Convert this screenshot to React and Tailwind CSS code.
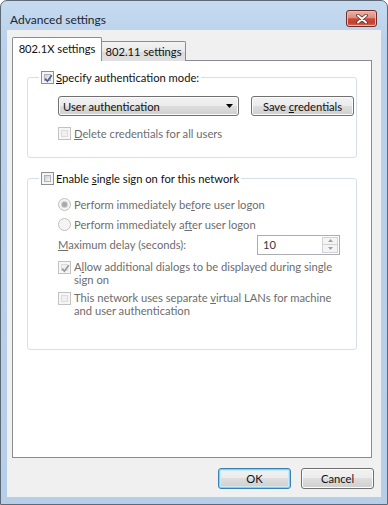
const btn =
  'border border-[#707070] rounded-[3px] bg-[linear-gradient(#f2f2f2_0%,#ebebeb_50%,#dddddd_50%,#cfcfcf_100%)] shadow-[inset_0_0_0_1px_#fbfbfb]'

function Check({ checked, disabled }) {
  return (
    <span
      className={`w-[13px] h-[13px] shrink-0 flex p-[2px] border ${
        disabled ? 'border-[#c2c2c2] bg-[#f6f6f6]' : 'border-[#8e8f8f] bg-[#f4f4f4]'
      }`}
    >
      <span
        className={`flex-1 relative ${
          disabled
            ? 'bg-[#f0f0f0] border border-[#dcdcdc]'
            : 'bg-[linear-gradient(135deg,#cbcfd5,#f7f7f7)] border border-[#aeb3b9]'
        }`}
      >
        {checked && (
          <svg width="11" height="11" viewBox="0 0 11 11" className="absolute -left-[2px] -top-[2px]">
            <path
              d="M2.2 5.6 L4.4 8.2 L8.8 2.2"
              fill="none"
              stroke={disabled ? '#9b9b9b' : '#4a5f8f'}
              strokeWidth="1.7"
            />
          </svg>
        )}
      </span>
    </span>
  )
}

function Radio({ checked }) {
  return (
    <span className="w-[13px] h-[13px] shrink-0 rounded-full border border-[#c0c0c0] bg-[#f4f4f4] flex items-center justify-center">
      {checked && <span className="w-[5px] h-[5px] rounded-full bg-[#a8a8a8] shadow-[0_0_0_1px_#d0d0d0]" />}
    </span>
  )
}

export default function App() {
  return (
    <div className="w-[388px] h-[505px] flex flex-col rounded-t-[7px] border border-[#5d6977] bg-[linear-gradient(#c6dbf0,#b9d1ea_40px,#b6cee8)] font-['Lato',sans-serif] text-[11.2px] leading-[15px] text-[#111] overflow-hidden">
      {/* title bar */}
      <div className="h-[29px] shrink-0 flex items-start justify-between pl-[9px] pr-[10px] pt-[9px]">
        <span className="mt-[2px] text-[12px] leading-[16px] text-[#1b2633]">Advanced settings</span>
        <div className="w-[31px] h-[17px] rounded-[3px] border border-[#6b2d27] bg-[linear-gradient(#eeb2a6_0%,#dc8d80_45%,#c94a3d_52%,#c2412f_80%,#d97464_100%)] flex items-center justify-center shadow-[inset_0_0_0_1px_#f2b8ac]">
          <svg width="12" height="10" viewBox="0 0 12 10">
            <path d="M2 1.5 L10 8.5 M10 1.5 L2 8.5" stroke="#6a2a22" strokeWidth="3.6" strokeLinecap="round" />
            <path d="M2 1.5 L10 8.5 M10 1.5 L2 8.5" stroke="#ffffff" strokeWidth="2" strokeLinecap="round" />
          </svg>
        </div>
      </div>

      {/* client area */}
      <div className="mx-[6px] h-[467px] shrink-0 bg-[#f0f0f0] flex flex-col pl-[5px] pr-[7px] pt-[7px]">
        {/* tabs */}
        <div className="flex items-end h-[24px] -mb-[1px] relative z-10">
          <div className="w-[90px] h-[24px] border border-b-0 border-[#898c95] bg-white rounded-t-[2px] text-center pt-[3px]">
            802.1X settings
          </div>
          <div className="w-[84px] h-[20px] border border-b-0 border-l-0 border-[#898c95] rounded-tr-[2px] bg-[linear-gradient(#f3f3f3,#e9e9e9_50%,#d9d9d9_51%,#e1e1e1)] text-center pt-[2px]">
            802.11 settings
          </div>
        </div>

        {/* tab panel */}
        <div className="w-[360px] h-[398px] border border-[#898c95] bg-white pl-[14px] pt-[8px]">
          <fieldset className="w-[330px] border border-[#d5dfe5] rounded-[3px] pl-[11px] pb-[16px]">
            <legend className="px-[2px] h-[16px] flex items-center gap-[2px]">
              <Check checked />
              <span>
                <u>S</u>pecify authentication mode:
              </span>
            </legend>
            <div className="ml-[19px] mt-[11px] flex items-center">
              <div className={`${btn} w-[181px] h-[20px] flex items-center justify-between pl-[4px] pr-[5px]`}>
                <span>User authentication</span>
                <svg width="7" height="4" viewBox="0 0 7 4">
                  <path d="M0 0 H7 L3.5 4 Z" fill="#000" />
                </svg>
              </div>
              <div className={`${btn} ml-[12px] w-[103px] h-[20px] flex items-center justify-center`}>
                <span>
                  Save <u>c</u>redentials
                </span>
              </div>
            </div>
            <div className="ml-[19px] mt-[10px] h-[15px] flex items-center gap-[3px] text-[#6d6d6d]">
              <Check disabled />
              <span>
                <u>D</u>elete credentials for all users
              </span>
            </div>
          </fieldset>

          <fieldset className="mt-[12px] w-[330px] border border-[#d5dfe5] rounded-[3px] pl-[11px] pb-[32px]">
            <legend className="px-[2px] h-[16px] flex items-center gap-[2px]">
              <Check />
              <span>
                Enable <u>s</u>ingle sign on for this network
              </span>
            </legend>
            <div className="ml-[19px] text-[#6d6d6d] flex flex-col">
              <div className="mt-[11px] h-[15px] flex items-center gap-[3px]">
                <Radio checked />
                <span>
                  Perform immediately be<u>f</u>ore user logon
                </span>
              </div>
              <div className="mt-[5px] h-[15px] flex items-center gap-[3px]">
                <Radio />
                <span>
                  Perform immediately a<u>f</u>ter user logon
                </span>
              </div>
              <div className="mt-[2px] h-[21px] flex items-center">
                <span className="w-[199px]">
                  <u>M</u>aximum delay (seconds):
                </span>
                <div className="w-[83px] h-[20px] border border-[#abadb3] bg-white flex items-center justify-between pl-[5px] pr-[1px] text-[#3a3a3a]">
                  <span>10</span>
                  <div className="w-[16px] h-[16px] flex flex-col border border-[#d2d2d2] bg-[#f4f4f4]">
                    <div className="flex-1 flex items-center justify-center border-b border-[#d2d2d2]">
                      <svg width="5" height="3" viewBox="0 0 5 3">
                        <path d="M0 3 L2.5 0 L5 3 Z" fill="#a0a0a0" />
                      </svg>
                    </div>
                    <div className="flex-1 flex items-center justify-center">
                      <svg width="5" height="3" viewBox="0 0 5 3">
                        <path d="M0 0 H5 L2.5 3 Z" fill="#a0a0a0" />
                      </svg>
                    </div>
                  </div>
                </div>
              </div>
              <div className="mt-[5px] flex items-start gap-[3px] leading-[13px]">
                <span className="mt-[1px] flex">
                  <Check checked disabled />
                </span>
                <span className="whitespace-nowrap flex flex-col">
                  <span>
                    A<u>l</u>low additional dialogs to be displayed during single
                  </span>
                  <span>sign on</span>
                </span>
              </div>
              <div className="mt-[5px] flex items-start gap-[3px] leading-[13px]">
                <span className="mt-[1px] flex">
                  <Check disabled />
                </span>
                <span className="whitespace-nowrap flex flex-col">
                  <span>
                    This network uses separate <u>v</u>irtual LANs for machine
                  </span>
                  <span>and user authentication</span>
                </span>
              </div>
            </div>
          </fieldset>
        </div>

        {/* dialog buttons */}
        <div className="mt-[10px] flex justify-end gap-[10px]">
          <div className="w-[73px] h-[21px] rounded-[3px] border border-[#3c7fb1] bg-[linear-gradient(#f2f2f2_0%,#ebebeb_50%,#dddddd_50%,#cfcfcf_100%)] shadow-[inset_0_0_0_1px_#86d0f3,inset_0_0_0_2px_#c6ebfb] flex items-center justify-center">
            OK
          </div>
          <div className={`${btn} w-[73px] h-[21px] flex items-center justify-center`}>Cancel</div>
        </div>
      </div>
    </div>
  )
}
